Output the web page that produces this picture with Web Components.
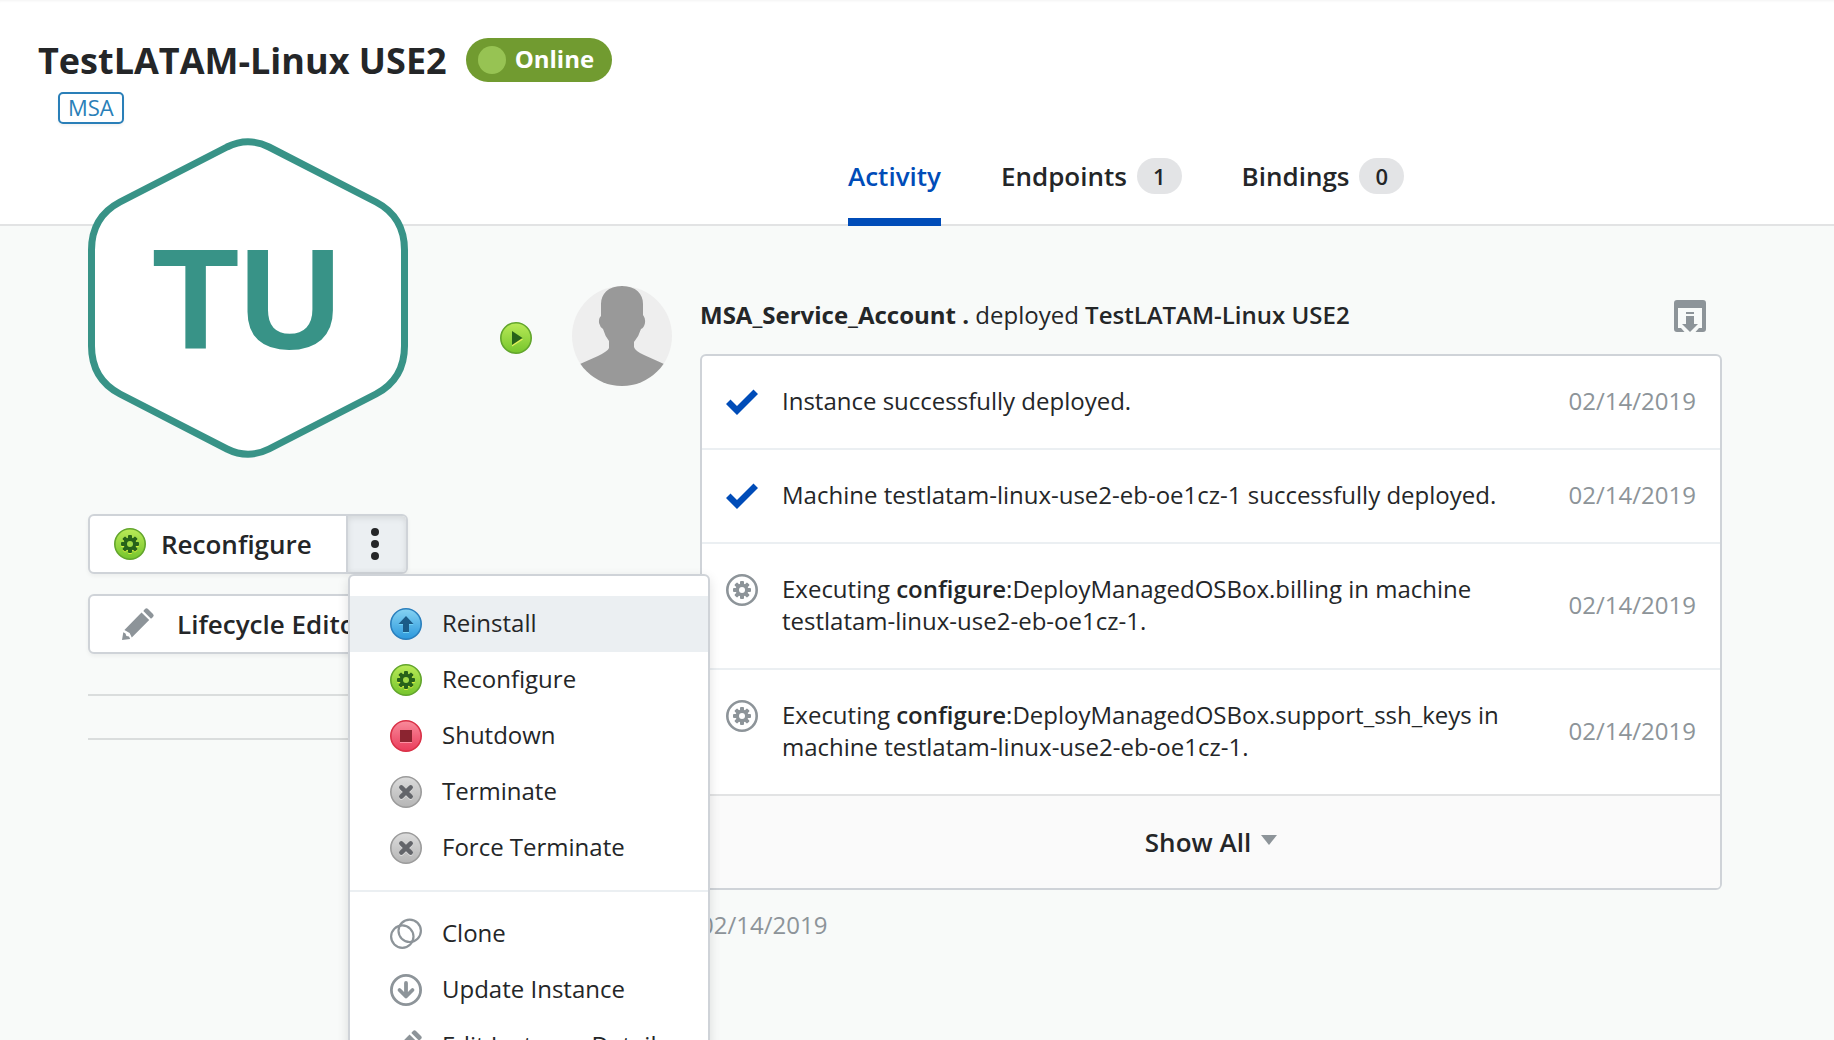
<!DOCTYPE html>
<html lang="en">
<head>
<meta charset="utf-8">
<title>TestLATAM-Linux USE2</title>
<style>
html, body { margin: 0; height: 100%; }
body { overflow: hidden; background: #f8faf9; color: #242628; font: 24px/32px "Open Sans", sans-serif; }
</style>
</head>
<body>
<instance-page></instance-page>
<script>
const gear = (fill, hole) => `<g fill="${fill}"><circle cx="16" cy="16" r="6.4"/>${[0, 45, 90, 135].map(a =>
  `<rect x="14" y="7" width="4" height="18" rx="1" transform="rotate(${a} 16 16)"/>`).join('')}</g><circle cx="16" cy="16" r="3" fill="${hole}"/>`;
const orb = (id, top, bottom, edge, body) => `<defs><linearGradient id="${id}" x1="0" y1="0" x2="0" y2="1"><stop offset="0" stop-color="${top}"/><stop offset="1" stop-color="${bottom}"/></linearGradient></defs>
  <circle cx="16" cy="16" r="15.2" fill="url(#${id})" stroke="${edge}" stroke-width="1.6"/>${body}`;
const cross = 'M11.3 11.3 20.7 20.7M20.7 11.3 11.3 20.7';
const ICONS = {
  reconfigure: orb('g', '#b9ea58', '#76c52c', '#62a52c', `<g transform="translate(0 1)">${gear('#d9ef3e', '#a5db49')}</g>${gear('#27621a', '#a0d946')}`),
  play: orb('g', '#b9ea58', '#76c52c', '#62a52c', '<path d="M12 10v14.500l11-7z" fill="#e3f05a"/><path d="M12 9v14l10.500-7z" fill="#27621a"/>'),
  reinstall: orb('g', '#86d3f3', '#2b98dc', '#2a7fbd', '<path d="M16 9l7.500 8H19v8h-6v-8H8.500z" fill="#6fd2f5"/><path d="M16 8l7.500 8H19v8h-6v-8H8.500z" fill="#1b5b87"/>'),
  shutdown: orb('g', '#f88b9b', '#ea3b5b', '#d93046', '<path d="M10 11h12v12H10z" fill="#ff8fa3"/><path d="M10 10h12v12H10z" fill="#8b2430"/>'),
  terminate: orb('g', '#dcdcdc', '#b5b5b5', '#9b9b9b', `<path d="${cross}" transform="translate(0 1)" stroke="#dedede" stroke-width="4.500" stroke-linecap="round"/><path d="${cross}" stroke="#63656a" stroke-width="4.500" stroke-linecap="round"/>`),
  step: `<circle cx="16" cy="16" r="14.700" fill="none" stroke="#8d9499" stroke-width="2.600"/>${gear('#8d9499', '#fff')}`,
  clone: '<g fill="none" stroke="#8d9499" stroke-width="2.200"><circle cx="12.300" cy="18.600" r="11.200"/><circle cx="19.700" cy="12.800" r="11.200"/></g>',
  update: '<g fill="none" stroke="#8d9499"><circle cx="16" cy="16" r="14.600" stroke-width="2.800"/><path d="M16 9v13M9.500 16l6.500 6.500 6.500-6.500" stroke-width="3.800" stroke-linecap="round" stroke-linejoin="round"/></g>',
  pencil: '<g fill="#8d9499"><path d="M19.500 4.500l7.700 7.500L9.800 29.500 7.600 25 2.400 22z"/><path d="M21.300 3l1.700-2q1.500-1.500 3 0l5 5q1.500 1.500 0 3l-2 1.700z"/><path d="M1.300 24.300l2.200 1.200.9 2.400 2.600.7 1.200 2.300L0 32z"/></g>',
  check: '<path d="M0 18l4.500-4.500 6.500 6.500L27.500 3.500 32 8 11 29z" fill="#004cb8"/>',
  save: '<g fill="#8d9499"><path d="M3 0h26q3 0 3 3v26q0 3-3 3h-7.500l3.500-4h3V8H4v20h3l3.500 4H3q-3 0-3-3V3q0-3 3-3z"/><path d="M12 12h8v2h-8zM12 16h8v8h4l-8 8-8-8h4z"/></g>',
  more: '<g fill="#242628"><circle cx="16" cy="4" r="4"/><circle cx="16" cy="16" r="4"/><circle cx="16" cy="28" r="4"/></g>'
};

function define(name, render) {
  customElements.define(name, class extends HTMLElement {
    connectedCallback() {
      if (!this.shadowRoot) this.attachShadow({ mode: 'open' }).innerHTML = render(this);
    }
  });
}

define('ui-icon', el => `
  <style>:host { display: block; flex: none; width: 32px; height: 32px; } svg { display: block; width: 100%; height: 100%; overflow: visible; }</style>
  <svg viewBox="0 0 32 32" aria-hidden="true">${ICONS[el.getAttribute('name')]}</svg>`);

define('status-pill', () => `
  <style>
    :host { display: flex; align-items: center; gap: 9px; height: 44px; padding: 0 18px 0 12px; border-radius: 22px; box-sizing: border-box; background: #719b30; color: #fff; font-weight: 700; font-size: 24px; }
    i { width: 28px; height: 28px; border-radius: 50%; background: #97c353; }
    span { padding-bottom: 2px; }
  </style><i></i><span><slot></slot></span>`);

define('outline-tag', () => `
  <style>:host { display: inline-block; box-sizing: border-box; height: 32px; padding: 0 8px; border: 2px solid #2a7fb8; border-radius: 5px; background: #fff; color: #2a7fb8; font-size: 22px; line-height: 26px; box-shadow: 0 2px 3px #0000000d; }</style><slot></slot>`);

define('nav-tab', el => `
  <style>
    :host { display: block; }
    a { display: flex; align-items: center; gap: 10px; height: 92px; box-sizing: border-box; border-bottom: 8px solid transparent; color: #242628; text-decoration: none; font-size: 26px; font-weight: 600; }
    a[aria-current] { color: #004cb8; border-color: #004cb8; }
    span { height: 36px; padding: 0 16px; border-radius: 18px; background: #e3e4e6; font-size: 22px; line-height: 36px; }
  </style>
  <a href="#"${el.hasAttribute('active') ? ' aria-current="page"' : ''}><slot></slot>${el.hasAttribute('count') ? `<span>${el.getAttribute('count')}</span>` : ''}</a>`);

define('page-header', () => `
  <style>
    :host { display: block; box-sizing: border-box; height: 226px; background: #fff; border-bottom: 2px solid #e2e3e4; box-shadow: inset 0 3px 3px -2px #0000000d; padding-top: 36px; }
    .title { display: flex; align-items: center; gap: 19px; padding-left: 38px; height: 48px; }
    h1 { margin: 0; padding-top: 2px; font-size: 36px; line-height: 48px; font-weight: 700; }
    .tag { display: flex; padding: 8px 0 0 58px; height: 32px; }
    nav { display: flex; gap: 60px; padding-left: 848px; padding-top: 10px; }
  </style>
  <div class="title"><h1>TestLATAM-Linux USE2</h1><status-pill>Online</status-pill></div>
  <div class="tag"><outline-tag>MSA</outline-tag></div>
  <nav><nav-tab active>Activity</nav-tab><nav-tab count="1">Endpoints</nav-tab><nav-tab count="0">Bindings</nav-tab></nav>`);

define('hex-logo', () => `
  <style>
    :host { display: grid; width: 320px; height: 320px; color: #389387; position: relative; }
    svg, b { grid-area: 1 / 1; }
    b { align-self: center; padding-top: 4px; font: 700 142px/160px "Liberation Sans", sans-serif; text-align: center; padding-right: 2px; }
  </style>
  <svg viewBox="0 0 320 320" aria-hidden="true"><path d="M139 9Q160-1.500 181 9L288 64Q316.500 79 316.500 112V208Q316.500 241 288 256L181 311Q160 321.500 139 311L32 256Q3.500 241 3.500 208V112Q3.500 79 32 64Z" fill="#fff" stroke="currentColor" stroke-width="7"/></svg>
  <b>TU</b>`);

define('menu-item', el => `
  <style>
    :host { display: block; }
    button { all: unset; display: flex; align-items: center; gap: 20px; box-sizing: border-box; width: 100%; height: 56px; padding: 0 40px; font: 24px/32px "Open Sans", sans-serif; color: #242628; white-space: nowrap; }
    span { padding-bottom: 2px; }
    :host([selected]) button { background: #ebeff2; }
  </style>
  <button type="button" role="menuitem"><ui-icon name="${el.getAttribute('icon')}"></ui-icon><span><slot></slot></span></button>`);

define('action-menu', () => `
  <style>
    :host { display: block; box-sizing: border-box; width: 362px; padding: 20px 0; background: #fff; border: 2px solid #cfd3d8; border-radius: 6px; box-shadow: 0 4px 12px #0000001f; }
    hr { margin: 14px 0; border: 0; height: 2px; background: #ebeff2; }
  </style>
  <menu-item icon="reinstall" selected>Reinstall</menu-item>
  <menu-item icon="reconfigure">Reconfigure</menu-item>
  <menu-item icon="shutdown">Shutdown</menu-item>
  <menu-item icon="terminate">Terminate</menu-item>
  <menu-item icon="terminate">Force Terminate</menu-item>
  <hr>
  <menu-item icon="clone">Clone</menu-item>
  <menu-item icon="update">Update Instance</menu-item>
  <menu-item icon="pencil">Edit Instance Details</menu-item>`);

define('side-panel', () => `
  <style>
    :host { display: block; width: 320px; margin-top: -88px; }
    .box { position: relative; display: flex; box-sizing: border-box; height: 60px; margin-top: 20px; border: 2px solid #cfd3d8; border-radius: 6px; background: #fff; box-shadow: 0 2px 4px #0000000d; }
    hex-logo + .box { margin-top: 56px; z-index: 1; }
    button { all: unset; display: flex; align-items: center; font: 600 26px/32px "Open Sans", sans-serif; }
    .main { flex: 1; gap: 15px; padding-left: 24px; }
    .wide { gap: 23px; padding-left: 32px; }
    .more { width: 54px; justify-content: center; border-left: 2px solid #cfd3d8; background: #ebeff2; border-radius: 0 4px 4px 0; box-shadow: inset 0 2px 6px #0000001a; padding-right: 4px; }
    action-menu { position: absolute; left: 258px; top: 58px; }
    hr { border: 0; height: 2px; background: #dadddd; margin: 40px 0 0; }
    hr + hr { margin-top: 42px; }
  </style>
  <hex-logo></hex-logo>
  <div class="box"><button class="main" type="button"><ui-icon name="reconfigure"></ui-icon>Reconfigure</button><button class="more" type="button" aria-label="More actions"><ui-icon name="more"></ui-icon></button><action-menu role="menu"></action-menu></div>
  <div class="box"><button class="main wide" type="button"><ui-icon name="pencil"></ui-icon>Lifecycle Editor</button></div>
  <hr><hr>`);

define('user-avatar', () => `
  <style>:host { display: block; width: 100px; height: 100px; border-radius: 50%; overflow: hidden; background: #eee; } svg { display: block; }</style>
  <svg viewBox="0 0 100 100" aria-hidden="true"><path d="M50 0C36 0 29 8 29 18V30Q26.500 32 27 37 28 41 31 43 33 50 37 55V62Q36 65 26 70L8 78V100H92V78L72 69Q63 65 62 61V56Q67 50 69 43 72 42 73 37 73.500 32 71 29V18C71 8 64 0 50 0Z" fill="#999"/></svg>`);

define('log-row', el => `
  <style>
    :host { display: flex; align-items: center; gap: 24px; padding: 29px 24px 30px; border-bottom: 2px solid #ebeff2; }
    ui-icon { align-self: flex-start; margin-top: 1px; }
    p { margin: 0; flex: 1; padding: 0 28px 1px 0; }
    time { color: #8d9499; padding-bottom: 1px; }
  </style>
  <ui-icon name="${el.getAttribute('icon')}"></ui-icon><p><slot></slot></p><time>02/14/2019</time>`);

define('activity-feed', () => `
  <style>
    :host { display: flex; align-items: flex-start; flex: 1; min-width: 0; }
    .play { margin: 96px 40px 0 0; }
    user-avatar { margin: 60px 28px 0 0; }
    .body { flex: 1; min-width: 0; }
    header { display: flex; justify-content: space-between; align-items: center; padding: 74px 16px 22px 0; height: 32px; }
    header span { padding-bottom: 2px; }
    b { font-weight: 600; }
    strong { font-weight: 700; }
    .card { border: 2px solid #cfd3d8; border-radius: 6px; background: #fff; overflow: hidden; }
    log-row:last-of-type { border-color: #e2e3e4; }
    button { all: unset; display: flex; width: 100%; height: 92px; align-items: center; justify-content: center; gap: 10px; background: #fafafa; font: 600 26px/32px "Open Sans", sans-serif; }
    .save { width: 32px; height: 32px; background: none; }
    .card svg { width: 16px; height: 12px; padding-bottom: 4px; }
    .when { display: block; margin-top: 19px; color: #8d9499; }
  </style>
  <ui-icon class="play" name="play"></ui-icon>
  <user-avatar></user-avatar>
  <div class="body">
    <header><span><strong>MSA_Service_Account .</strong> deployed <b>TestLATAM-Linux USE2</b></span><button class="save" type="button" aria-label="Save log"><ui-icon name="save"></ui-icon></button></header>
    <div class="card">
      <log-row icon="check">Instance successfully deployed.</log-row>
      <log-row icon="check">Machine testlatam-linux-use2-eb-oe1cz-1 successfully deployed.</log-row>
      <log-row icon="step">Executing <b>configure</b>:DeployManagedOSBox.billing in machine testlatam-linux-use2-eb-oe1cz-1.</log-row>
      <log-row icon="step">Executing <b>configure</b>:DeployManagedOSBox.support_ssh_keys in machine testlatam-linux-use2-eb-oe1cz-1.</log-row>
      <button type="button">Show All <svg viewBox="0 0 16 12" aria-hidden="true"><path d="M0 1h16L8 11z" fill="#8d9499"/></svg></button>
    </div>
    <time class="when">02/14/2019</time>
  </div>`);

define('instance-page', () => `
  <style>
    :host { display: block; height: 100vh; overflow: hidden; }
    main { display: flex; gap: 92px; padding: 0 112px 0 88px; }
    side-panel { position: relative; z-index: 1; flex: none; }
  </style>
  <page-header></page-header>
  <main><side-panel></side-panel><activity-feed></activity-feed></main>`);
</script>
</body>
</html>
